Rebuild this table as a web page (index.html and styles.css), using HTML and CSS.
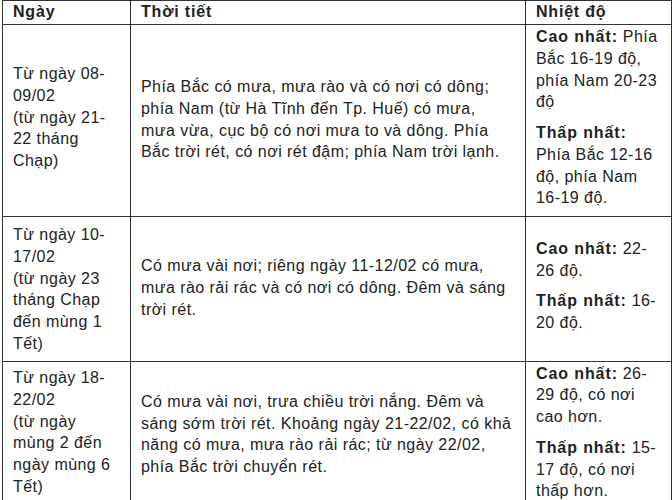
FILE: index.html
```html
<!DOCTYPE html>
<html lang="vi">
<head>
<meta charset="utf-8">
<link rel="stylesheet" href="styles.css">
</head>
<body>
<table class="forecast">
  <colgroup>
    <col class="c-day">
    <col class="c-weather">
    <col class="c-temp">
  </colgroup>
  <thead>
    <tr><th>Ngày</th><th>Thời tiết</th><th>Nhiệt độ</th></tr>
  </thead>
  <tbody>
    <tr>
      <td><p>Từ ngày 08-09/02<br>(từ ngày 21-22 tháng Chạp)</p></td>
      <td class="weather"><p>Phía Bắc có mưa, mưa rào và có nơi có dông; phía Nam (từ Hà Tĩnh đến Tp. Huế) có mưa, <span class="nw">mưa vừa,</span> cục bộ có nơi mưa to và dông. Phía Bắc trời rét, có nơi rét đậm; phía Nam trời lạnh.</p></td>
      <td class="temp"><p class="lead"><b>Cao nhất:</b> Phía Bắc 16-19 độ, phía Nam 20-23 độ</p><p><b>Thấp nhất:</b> Phía Bắc 12-16 độ, phía Nam 16-19 độ.</p></td>
    </tr>
    <tr>
      <td class="spaced"><p>Từ ngày 10-17/02<br>(từ ngày 23 tháng Chạp đến mùng 1 Tết)</p></td>
      <td class="weather"><p>Có mưa vài nơi; riêng ngày 11-12/02 có mưa, mưa rào rải rác và có nơi có dông. Đêm và sáng trời rét.</p></td>
      <td class="temp"><p class="lead"><b>Cao nhất:</b> 22-26 độ.</p><p><b>Thấp nhất:</b> 16-20 độ.</p></td>
    </tr>
    <tr>
      <td><p>Từ ngày 18-22/02<br>(từ ngày mùng 2 đến ngày mùng 6 Tết)</p></td>
      <td class="weather"><p>Có mưa vài nơi, trưa chiều trời nắng. Đêm và sáng sớm trời rét. Khoảng ngày 21-22/02, có khả năng có mưa, mưa rào rải rác; từ ngày 22/02, phía Bắc trời chuyển rét.</p></td>
      <td class="temp"><p class="lead"><b>Cao nhất:</b> 26-29 độ, có nơi cao hơn.</p><p><b>Thấp nhất:</b> 15-17 độ, có nơi thấp hơn.</p></td>
    </tr>
  </tbody>
</table>
</body>
</html>
```

FILE: styles.css
```css
html, body {
  margin: 0;
  padding: 0;
  background: #fff;
}
body {
  font-family: "Liberation Sans", Arial, sans-serif;
  font-size: 16px;
  letter-spacing: 0.45px;
  line-height: 21.75px;
  color: #222;
}
.forecast {
  border-collapse: collapse;
  table-layout: fixed;
  width: 669px;
  margin-left: 2px;
}
.c-day { width: 128px; }
.c-weather { width: 395px; }
.c-temp { width: 146px; }
.forecast th,
.forecast td {
  border: 1px solid #333;
  padding: 1px 10px 0;
  vertical-align: middle;
  text-align: left;
}
.forecast th {
  font-weight: bold;
  letter-spacing: 0.8px;
  line-height: 22px;
  padding: 0 10px 1px;
}
.forecast p {
  margin: 0 0 7px;
}
.forecast .weather p {
  margin-bottom: 3px;
}
.forecast .temp .lead {
  margin-bottom: 9px;
}
.forecast .spaced p {
  margin: 6px 0;
}
.forecast b {
  font-weight: bold;
  letter-spacing: 0.9px;
}
.nw {
  white-space: nowrap;
}
```
